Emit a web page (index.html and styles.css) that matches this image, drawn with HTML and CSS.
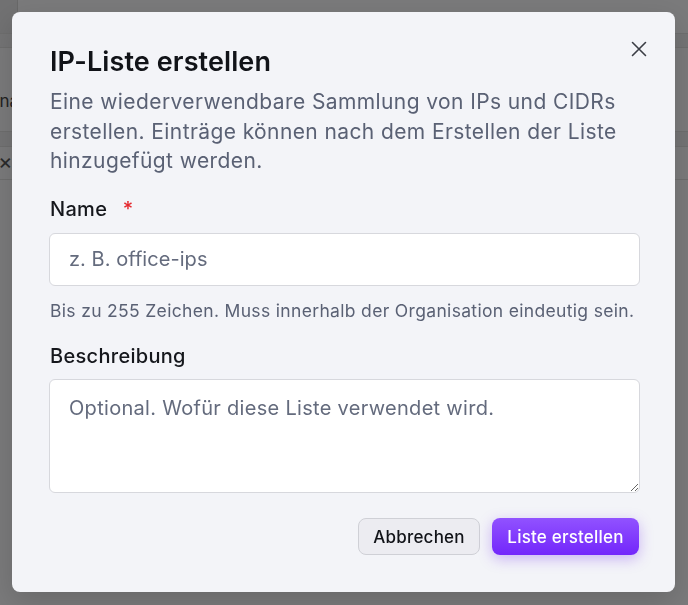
FILE: index.html
```html
<!DOCTYPE html>
<html lang="de">
<head>
<meta charset="utf-8">
<title>IP-Liste erstellen</title>
<link rel="stylesheet" href="styles.css">
</head>
<body>
<div class="page">
  <div class="topbar"><div class="topcell"></div></div>
  <div class="subbar"></div>
  <div class="row"><span class="cut">Ina</span></div>
  <div class="band"></div>
  <div class="row small"><span class="cutx">×</span></div>
</div>
<div class="backdrop">
  <div class="dialog" role="dialog">
    <button class="close" aria-label="Schließen">
      <svg width="18" height="18" viewBox="0 0 18 18"><path d="M2.5 2.5 L15.5 15.5 M15.5 2.5 L2.5 15.5" stroke="#3a3d45" stroke-width="1.6" stroke-linecap="round" fill="none"/></svg>
    </button>
    <h2 class="title">IP-Liste erstellen</h2>
    <p class="desc">Eine wiederverwendbare Sammlung von IPs und CIDRs erstellen. Einträge können nach dem Erstellen der Liste hinzugefügt werden.</p>
    <div class="field">
      <label class="label">Name <span class="req">*</span></label>
      <input class="input" type="text" placeholder="z. B. office-ips">
      <div class="hint">Bis zu 255 Zeichen. Muss innerhalb der Organisation eindeutig sein.</div>
    </div>
    <div class="field">
      <label class="label">Beschreibung</label>
      <textarea class="textarea" placeholder="Optional. Wofür diese Liste verwendet wird."></textarea>
    </div>
    <div class="actions">
      <button class="btn secondary">Abbrechen</button>
      <button class="btn primary">Liste erstellen</button>
    </div>
  </div>
</div>
</body>
</html>
```
FILE: styles.css
```css
* { box-sizing: border-box; }
html, body { margin: 0; height: 100%; }
body {
  font-family: Inter, "Noto Sans", sans-serif;
  background: #f4f4f6;
  overflow: hidden;
}
.page { width: 100%; }
.topbar { height: 34px; border-bottom: 1px solid #dcdcdc; display: flex; }
.topcell { width: 18px; background: #e2e2e4; border-right: 1px solid #d0d0d0; }
.subbar { height: 14px; background: #e8e8ea; border-bottom: 1px solid #dcdcdc; }
.row { height: 84px; border-bottom: 1px solid #dcdcdc; display: flex; align-items: flex-start; padding-top: 42px; font-size: 17px; line-height: 22px; color: #444; }
.cut { margin-left: -5px; }
.band { height: 15px; background: #e8e8ea; border-bottom: 1px solid #dcdcdc; }
.row.small { height: 33px; padding-top: 3px; }
.cutx { margin-left: -2px; font-size: 22px; color: #555; }

.backdrop {
  position: fixed;
  inset: 0;
  background: rgba(0, 0, 0, 0.5);
  padding: 12px 13px 13px 12px;
}
.dialog {
  position: relative;
  width: 663px;
  height: 580px;
  background: #f3f4f8;
  border-radius: 8px;
  padding: 33px 36px 37px 38px;
  display: flex;
  flex-direction: column;
  box-shadow: 0 10px 30px rgba(0,0,0,0.15);
}
.close {
  position: absolute;
  top: 28px;
  right: 27px;
  width: 18px;
  height: 18px;
  padding: 0;
  border: 0;
  background: none;
  display: flex;
}
.title {
  margin: 0;
  font-size: 27px;
  line-height: 33px;
  font-weight: 600;
  color: #111318;
  letter-spacing: 0.1px;
}
.desc {
  margin: 9px 0 0;
  font-size: 21px;
  line-height: 29.5px;
  color: #5a6174;
  letter-spacing: 0.4px;
}
.field { display: flex; flex-direction: column; margin-top: 20px; }
.field + .field { margin-top: 20px; }
.label {
  font-size: 20px;
  line-height: 26px;
  color: #15171c;
  font-weight: 500;
  letter-spacing: 0.3px;
}
.req { color: #e5282e; margin-left: 10px; }
.input, .textarea {
  margin-top: 11px;
  width: 591px;
  margin-left: -1px;
  border: 1.5px solid #d7d8dd;
  border-radius: 6px;
  background: #fff;
  font-family: inherit;
  font-size: 20px;
  color: #15171c;
  padding: 0 19px;
  letter-spacing: 0.3px;
}
.input { height: 53px; letter-spacing: 0.05px; }
.textarea { margin-top: 10px; height: 114px; padding-top: 14px; resize: vertical; line-height: 28px; }
.input::placeholder, .textarea::placeholder { color: #646b7d; }
.hint {
  margin-top: 13px;
  font-size: 17.5px;
  line-height: 24px;
  color: #5a6174;
  letter-spacing: 0.33px;
  white-space: nowrap;
}
.actions {
  margin-top: auto;
  display: flex;
  justify-content: flex-end;
  gap: 12px;
}
.btn {
  height: 37px;
  border-radius: 8px;
  font-family: inherit;
  font-size: 17px;
  font-weight: 500;
  padding: 0 14px;
  letter-spacing: 0.2px;
}
.secondary {
  background: #ececf1;
  border: 1.5px solid #cfd0d6;
  color: #111318;
  width: 122px;
}
.primary {
  background: linear-gradient(180deg, #9152ff 0%, #7326fb 100%);
  border: 0;
  color: #fff;
  width: 147px;
  box-shadow: 0 4px 14px rgba(124, 58, 237, 0.35);
}
```
